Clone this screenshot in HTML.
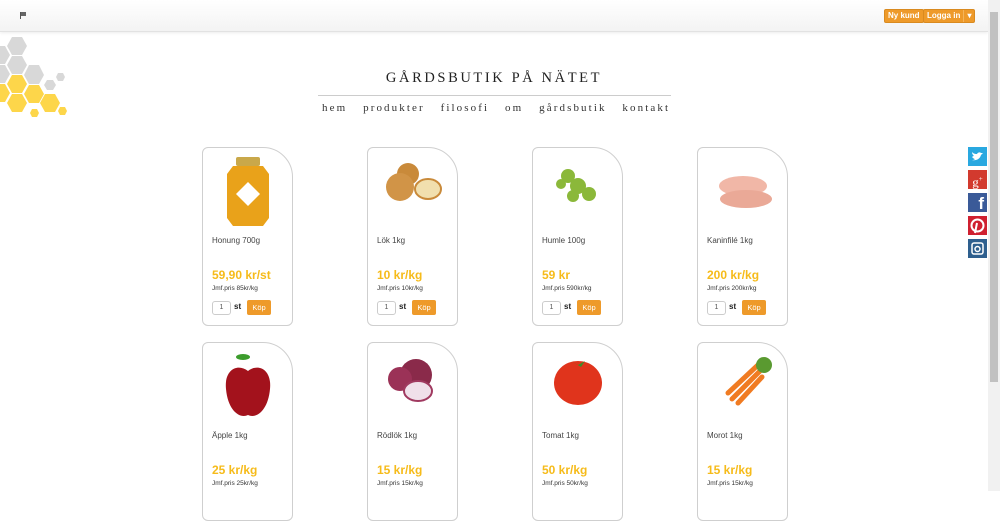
<!DOCTYPE html>
<html><head><meta charset="utf-8"><style>
*{margin:0;padding:0;box-sizing:border-box}
body{width:1000px;height:491px;overflow:hidden;background:#fff;font-family:"Liberation Sans",sans-serif;position:relative}
.top{position:absolute;left:0;top:0;width:988px;height:32px;background:linear-gradient(#fff,#f3f3f3);border-bottom:1px solid #e2e2e2;box-shadow:0 1px 3px rgba(0,0,0,.08)}
.btn{position:absolute;top:9px;height:14px;background:#ee9a2a;border:1px solid #d98a1f;border-radius:2px;color:#fff;font-size:8px;font-weight:bold;line-height:12px;padding:0 3px}
.sb{position:absolute;right:0;top:0;width:12px;height:491px;background:#f1f1f1}
.sb div{position:absolute;left:2px;top:12px;width:8px;height:370px;background:#c1c1c1}
h1{position:absolute;left:0;width:988px;top:70px;text-align:center;font-family:"Liberation Serif",serif;font-weight:normal;font-size:14.5px;letter-spacing:2.6px;color:#222}
.line{position:absolute;left:318px;width:353px;top:95px;border-top:1px solid #ccc}
.nav{position:absolute;left:322px;top:102px;font-family:"Liberation Serif",serif;font-size:11px;letter-spacing:2.1px;color:#333;word-spacing:11px}
.card{position:absolute;width:91px;height:179px;border:1.5px solid #cfcfcf;border-radius:6px 30px 6px 6px;background:#fff}
.card .n{position:absolute;left:9px;top:88px;font-size:8px;color:#444}
.card .p{position:absolute;left:9px;top:120px;font-size:12px;font-weight:bold;color:#f6bb1a}
.card .j{position:absolute;left:9px;top:137px;font-size:6.5px;color:#333}
.card .q{position:absolute;left:9px;top:153px;width:19px;height:14px;border:1px solid #ccc;border-radius:3px;font-size:7px;text-align:center;line-height:12px;color:#555}
.card .st{position:absolute;left:31px;top:154px;font-size:8px;font-weight:bold;color:#222}
.card .k{position:absolute;left:44px;top:152px;width:24px;height:15px;background:#ee9a2a;border-radius:2px;color:#fff;font-size:7.5px;text-align:center;line-height:15px}
.img{position:absolute;left:10px;top:6px;width:70px;height:74px}
.soc{position:absolute;left:968px;width:19px;height:19px}
</style></head><body>
<div class="top"><div style="position:absolute;left:20px;top:12px;width:1px;height:7px;background:#555"></div><div style="position:absolute;left:21px;top:12px;width:5px;height:4px;background:#666"></div></div>
<div class="btn" style="left:884px">Ny kund</div>
<div class="btn" style="left:923px;width:52px">Logga in <span style="position:absolute;left:39px;top:0;border-left:1px solid #f5b45a;width:12px;text-align:center">▾</span></div>
<div class="sb"><div></div></div>
<svg style="position:absolute;left:0;top:34px" width="72" height="86" viewBox="0 0 72 86">
<g fill="#d8d8d8"><polygon points="12,3 22,3 27,12 22,21 12,21 7,12"/><polygon points="-3,12 5,12 10,21 5,30 -3,30"/><polygon points="12,22 22,22 27,31 22,40 12,40 7,31"/><polygon points="-3,31 5,31 10,40 5,49 -3,49"/><polygon points="29,31 39,31 44,41 39,50 29,50 24,41"/><polygon points="47,46 53,46 56,51 53,56 47,56 44,51"/><polygon points="58,39 63,39 65,43 63,47 58,47 56,43"/></g>
<g fill="#fdd64a"><polygon points="12,41 22,41 27,50 22,59 12,59 7,50"/><polygon points="-3,50 5,50 10,59 5,68 -3,68"/><polygon points="29,51 39,51 44,60 39,69 29,69 24,60"/><polygon points="12,60 22,60 27,69 22,78 12,78 7,69"/><polygon points="45,60 55,60 60,69 55,78 45,78 40,69"/><polygon points="32,75 37,75 39,79 37,83 32,83 30,79"/><polygon points="60,73 65,73 67,77 65,81 60,81 58,77"/></g></svg>
<h1>GÅRDSBUTIK PÅ NÄTET</h1>
<div class="line"></div>
<div class="nav">hem produkter filosofi om&nbsp;gårdsbutik kontakt</div>

<div class="card" style="left:202px;top:147px"><svg class="img" viewBox="0 0 70 74"><rect x="23" y="3" width="24" height="9" rx="2" fill="#c9a84a"/><path d="M20 12h30l6 8v44l-6 8H20l-6-8V20z" fill="#e9a21a"/><path d="M35 28l12 12-12 12-12-12z" fill="#fff"/></svg><div class="n">Honung 700g</div><div class="p">59,90 kr/st</div><div class="j">Jmf.pris 85kr/kg</div><div class="q">1</div><div class="st">st</div><div class="k">Köp</div></div>
<div class="card" style="left:367px;top:147px"><svg class="img" viewBox="0 0 70 74"><circle cx="30" cy="20" r="11" fill="#c98a3a"/><circle cx="22" cy="33" r="14" fill="#d19447"/><ellipse cx="50" cy="35" rx="13" ry="10" fill="#f1dfae" stroke="#c98a3a" stroke-width="2"/></svg><div class="n">Lök 1kg</div><div class="p">10 kr/kg</div><div class="j">Jmf.pris 10kr/kg</div><div class="q">1</div><div class="st">st</div><div class="k">Köp</div></div>
<div class="card" style="left:532px;top:147px"><svg class="img" viewBox="0 0 70 74"><g fill="#8bb83a"><circle cx="25" cy="22" r="7"/><circle cx="35" cy="32" r="8"/><circle cx="46" cy="40" r="7"/><circle cx="30" cy="42" r="6"/><circle cx="18" cy="30" r="5"/></g></svg><div class="n">Humle 100g</div><div class="p">59 kr</div><div class="j">Jmf.pris 590kr/kg</div><div class="q">1</div><div class="st">st</div><div class="k">Köp</div></div>
<div class="card" style="left:697px;top:147px"><svg class="img" viewBox="0 0 70 74"><ellipse cx="35" cy="32" rx="24" ry="10" fill="#f1b7a7"/><ellipse cx="38" cy="45" rx="26" ry="9" fill="#eaa997"/></svg><div class="n">Kaninfilé 1kg</div><div class="p">200 kr/kg</div><div class="j">Jmf.pris 200kr/kg</div><div class="q">1</div><div class="st">st</div><div class="k">Köp</div></div>

<div class="card" style="left:202px;top:342px"><svg class="img" viewBox="0 0 70 74"><path d="M35 22c-10-8-24-2-22 18 2 22 14 30 22 26 8 4 20-4 22-26 2-20-12-26-22-18z" fill="#a3121c"/><ellipse cx="30" cy="8" rx="7" ry="3" fill="#3c9c2c"/></svg><div class="n">Äpple 1kg</div><div class="p">25 kr/kg</div><div class="j">Jmf.pris 25kr/kg</div></div>
<div class="card" style="left:367px;top:342px"><svg class="img" viewBox="0 0 70 74"><circle cx="38" cy="26" r="16" fill="#8a2a4a"/><circle cx="22" cy="30" r="12" fill="#9b3257"/><ellipse cx="40" cy="42" rx="14" ry="10" fill="#f0e0ea" stroke="#a03a60" stroke-width="2"/></svg><div class="n">Rödlök 1kg</div><div class="p">15 kr/kg</div><div class="j">Jmf.pris 15kr/kg</div></div>
<div class="card" style="left:532px;top:342px"><svg class="img" viewBox="0 0 70 74"><ellipse cx="35" cy="34" rx="24" ry="22" fill="#e0341c"/><path d="M28 12l7 4 7-4-4 6z" fill="#3f8a2a"/></svg><div class="n">Tomat 1kg</div><div class="p">50 kr/kg</div><div class="j">Jmf.pris 50kr/kg</div></div>
<div class="card" style="left:697px;top:342px"><svg class="img" viewBox="0 0 70 74"><g stroke="#f07b22" stroke-width="5" stroke-linecap="round"><path d="M50 16L20 44"/><path d="M52 22L24 50"/><path d="M54 28L30 54"/></g><circle cx="56" cy="16" r="8" fill="#5a9a30"/></svg><div class="n">Morot 1kg</div><div class="p">15 kr/kg</div><div class="j">Jmf.pris 15kr/kg</div></div>

<div class="soc" style="top:147px;background:#29a8e0"><svg viewBox="0 0 19 19"><path d="M4 13c4 1 8-1 9-5l2-2-2 0c-1-1-3-1-4 1-3 0-4-1-5-2 0 2 1 3 2 4-1 0-2 1-2 1 1 1 2 2 3 2-1 1-2 1-3 1z" fill="#fff"/></svg></div>
<div class="soc" style="top:170px;background:#d23a2e;color:#fff;font-family:'Liberation Serif',serif;font-size:13px;text-align:center;line-height:18px">g<sup style="font-size:7px">+</sup></div>
<div class="soc" style="top:193px;background:#3a5a98;color:#fff;font-weight:bold;font-size:17px;text-align:right;padding-right:3px;line-height:22px">f</div>
<div class="soc" style="top:216px;background:#cf2030"><svg viewBox="0 0 19 19"><circle cx="9.5" cy="9.5" r="6" fill="none" stroke="#fff" stroke-width="2"/><path d="M9 7l-2 10" stroke="#fff" stroke-width="2"/></svg></div>
<div class="soc" style="top:239px;background:#2e5f8e"><svg viewBox="0 0 19 19"><rect x="4" y="4" width="11" height="11" rx="2" fill="none" stroke="#fff" stroke-width="1.5"/><circle cx="9.5" cy="10" r="2.5" fill="none" stroke="#fff" stroke-width="1.5"/></svg></div>
</body></html>
